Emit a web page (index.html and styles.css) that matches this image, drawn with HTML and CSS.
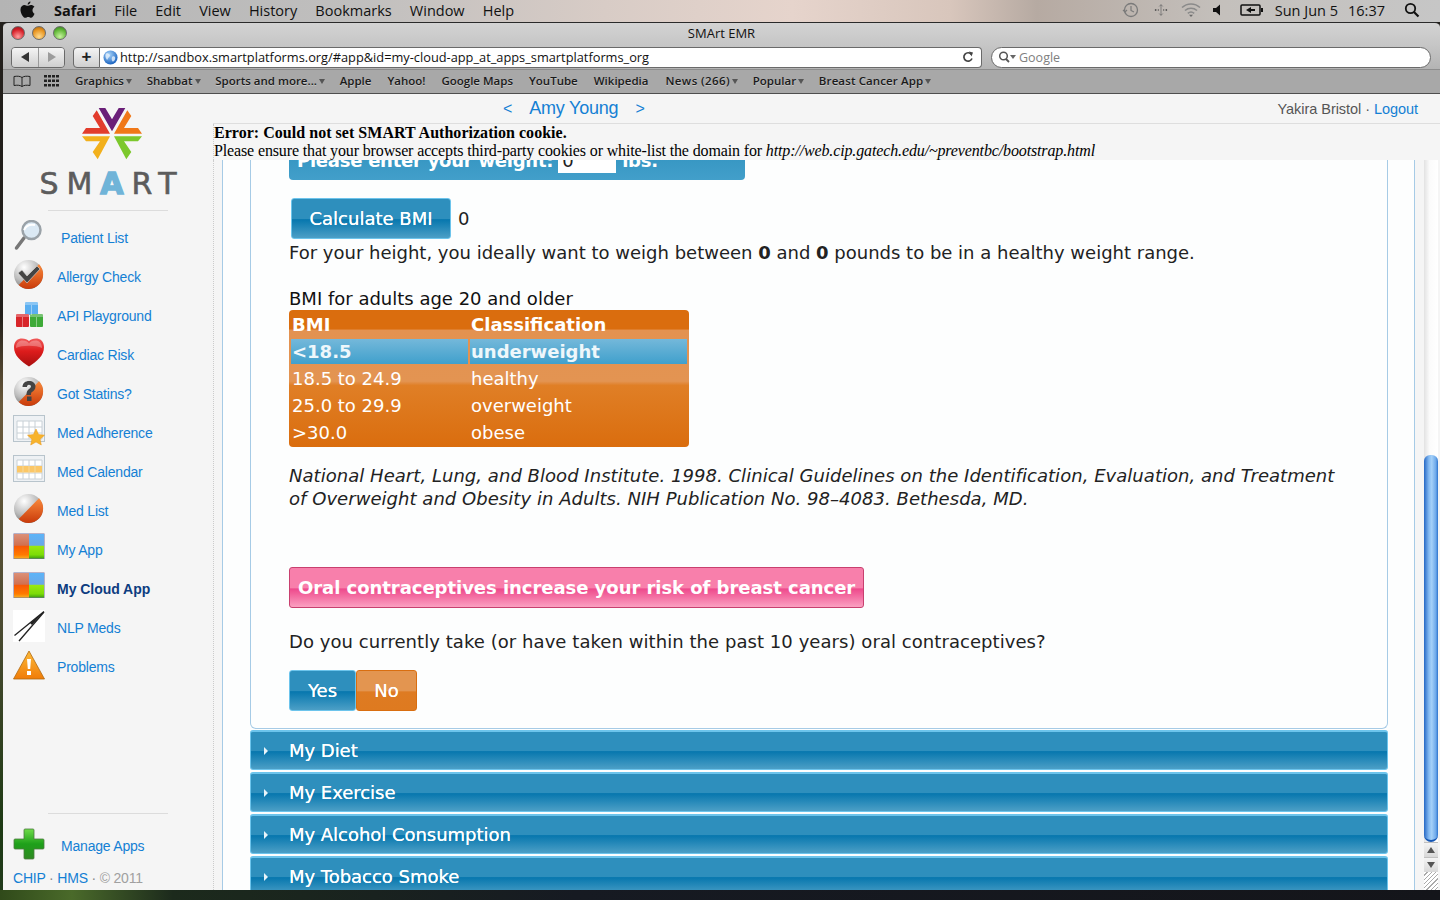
FILE: index.html
```html
<!DOCTYPE html>
<html lang="en">
<head>
<meta charset="utf-8">
<title>SMArt EMR</title>
<link rel="stylesheet" href="styles.css">
</head>
<body>
<svg class="defs" aria-hidden="true">
  <defs>
    <radialGradient id="gBall" cx="35%" cy="25%" r="85%"><stop offset="0" stop-color="#fff"/><stop offset=".55" stop-color="#bbb"/><stop offset="1" stop-color="#666"/></radialGradient>
    <linearGradient id="gOrange" x1="0" y1="0" x2="0" y2="1"><stop offset="0" stop-color="#f98a3c"/><stop offset="1" stop-color="#c93a0a"/></linearGradient>
    <linearGradient id="gHeart" x1="0" y1="0" x2="0" y2="1"><stop offset="0" stop-color="#f05a5a"/><stop offset=".45" stop-color="#dd1c1c"/><stop offset="1" stop-color="#a80f0f"/></linearGradient>
    <linearGradient id="gWarn" x1="0" y1="0" x2="0" y2="1"><stop offset="0" stop-color="#fdbb3a"/><stop offset="1" stop-color="#f07c08"/></linearGradient>
    <linearGradient id="gPlus" x1="0" y1="0" x2="0" y2="1"><stop offset="0" stop-color="#6fdc4a"/><stop offset=".5" stop-color="#1ea01a"/><stop offset="1" stop-color="#2f8a22"/></linearGradient>
    <linearGradient id="gQ1" x1="0" y1="0" x2="0" y2="1"><stop offset="0" stop-color="#dc9078"/><stop offset=".46" stop-color="#d07050"/><stop offset=".5" stop-color="#f85806"/><stop offset=".85" stop-color="#ff7a00"/><stop offset="1" stop-color="#f8b020"/></linearGradient>
    <linearGradient id="gQ2" x1="0" y1="0" x2="0" y2="1"><stop offset="0" stop-color="#5cb4f8"/><stop offset=".46" stop-color="#6aa8e8"/><stop offset=".5" stop-color="#9ae810"/><stop offset=".85" stop-color="#7cdc08"/><stop offset="1" stop-color="#40a010"/></linearGradient>
    <radialGradient id="gGlobe" cx="40%" cy="30%" r="70%"><stop offset="0" stop-color="#a8d4fa"/><stop offset="1" stop-color="#1a63c0"/></radialGradient>
    <symbol id="iBall" viewBox="0 0 32 32"><circle cx="15.500" cy="15.500" r="14.500" fill="url(#gBall)"/><path d="M26 5.300A14.500 14.500 0 0 1 5.700 26Z" fill="url(#gOrange)"/></symbol>
    <symbol id="iQuad" viewBox="0 0 32 32"><rect x=".5" y="1.500" width="31" height="25.500" fill="#7470a0"/><rect x="1" y="2" width="15" height="24.500" fill="url(#gQ1)"/><rect x="16" y="2" width="15" height="24.500" fill="url(#gQ2)"/></symbol>
  </defs>
</svg>

<div class="screen">
  <header class="menubar">
    <svg class="apple" viewBox="0 0 16 18"><path d="M11.200 0c.1 1.600-1.200 3.300-3 3.300C8 1.700 9.500.2 11.200 0ZM15.500 13c-.6 1.400-2 4.200-3.500 4.300-1.300 0-1.700-.8-3.200-.8s-2 .8-3.200.8C3.600 17.300.5 12.400.5 8.600c0-3.400 2.300-5 4.300-5 1.300 0 2.500.9 3.300.9.800 0 2.200-1 3.700-.9 1.100 0 2.700.5 3.600 1.900-3 1.900-2.500 6 .1 7.500Z" fill="#111"/></svg>
    <nav class="menu-items">
      <span class="menu-strong">Safari</span><span>File</span><span>Edit</span><span>View</span><span>History</span><span>Bookmarks</span><span>Window</span><span>Help</span>
    </nav>
    <div class="status">
      <svg class="st-clock" viewBox="0 0 18 18"><circle cx="9" cy="9" r="6.500" fill="none" stroke="#7a7a7a" stroke-width="1.300"/><path d="M9 5v4.500l3 1.500M1 9l2 2 2-2" fill="none" stroke="#7a7a7a" stroke-width="1.200"/></svg>
      <svg class="st-bt" viewBox="0 0 18 18"><g fill="#555"><circle cx="3" cy="9" r="1"/><circle cx="15" cy="9" r="1"/><circle cx="6" cy="9" r=".8"/><circle cx="12" cy="9" r=".8"/></g><path d="M9 3v12M7 5l2-2 2 2M7 13l2 2 2-2" fill="none" stroke="#666" stroke-width=".8"/></svg>
      <svg class="st-wifi" viewBox="0 0 20 16"><path d="M1 5.500a13 13 0 0 1 18 0M4 8.500a9 9 0 0 1 12 0M6.800 11.300a5 5 0 0 1 6.400 0" fill="none" stroke="#8a8a8a" stroke-width="1.500"/><path d="M10 15l-2-2.200h4Z" fill="#6a6a6a"/></svg>
      <svg class="st-vol" viewBox="0 0 14 14"><path d="M2 5h3l4-3.500v11L5 9H2Z" fill="#111"/></svg>
      <svg class="st-bat" viewBox="0 0 24 14"><rect x="1" y="2" width="19" height="10" rx="1" fill="none" stroke="#111" stroke-width="1.500"/><rect x="21" y="5" width="2" height="4" fill="#111"/><path d="M6 7l5-3v6ZM10 6h5v2h-5Z" fill="#111"/></svg>
      <span class="clock-date">Sun Jun 5</span>
      <span class="clock-time">16:37</span>
      <svg class="st-search" viewBox="0 0 16 16"><circle cx="6.500" cy="6.500" r="4.700" fill="none" stroke="#111" stroke-width="1.800"/><path d="M10 10l4.500 4.500" stroke="#111" stroke-width="2.200"/></svg>
    </div>
  </header>

  <div class="window">
    <div class="titlebar">
      <div class="lights"><i class="light red"></i><i class="light amber"></i><i class="light green"></i></div>
      <div class="title">SMArt EMR</div>
    </div>
    <div class="toolbar">
      <div class="navbtns">
        <span class="navbtn"><i class="arrow-l"></i></span><span class="navbtn"><i class="arrow-r"></i></span>
      </div>
      <div class="address">
        <span class="addbtn">+</span>
        <div class="urlfield">
          <svg class="globe" viewBox="0 0 16 16"><circle cx="8" cy="8" r="7.500" fill="url(#gGlobe)"/><path d="M3 4c2-1 3 0 4 1s0 2-1 3-1 3-2 2-2-4-1-6Zm7 3c2-1 3 0 3 2s-2 4-3 3-1-4 0-5Z" fill="#e8f2fc" opacity=".8"/></svg>
          <span class="url">http://sandbox.smartplatforms.org/#app&amp;id=my-cloud-app_at_apps_smartplatforms_org</span>
          <svg class="reload" viewBox="0 0 12 12"><path d="M9.500 3.500A4.200 4.200 0 1 0 10 7.500" fill="none" stroke="#444" stroke-width="1.700"/><path d="M7 .5l4 1-1.500 4Z" fill="#444"/></svg>
        </div>
      </div>
      <div class="searchfield">
        <svg class="sf-icon" viewBox="0 0 20 12"><circle cx="5.500" cy="5" r="3.800" fill="none" stroke="#555" stroke-width="1.500"/><path d="M8 8l3 3" stroke="#555" stroke-width="1.800"/><path d="M12 4h6l-3 4Z" fill="#666"/></svg>
        <span class="sf-text">Google</span>
      </div>
    </div>
    <div class="bookmarks">
      <svg class="bm-book" viewBox="0 0 18 12"><path d="M9 2.500C7 1 4 1 1 1.500v9c3-.5 6-.5 8 1 2-1.500 5-1.500 8-1v-9C14 1 11 1 9 2.500Zm0 0v9" fill="none" stroke="#222" stroke-width="1"/></svg>
      <svg class="bm-grid" viewBox="0 0 15 12"><g fill="#222"><rect x="0" y="0" width="3" height="2.500"/><rect x="4" y="0" width="3" height="2.500"/><rect x="8" y="0" width="3" height="2.500"/><rect x="12" y="0" width="3" height="2.500"/><rect x="0" y="4.500" width="3" height="2.500"/><rect x="4" y="4.500" width="3" height="2.500"/><rect x="8" y="4.500" width="3" height="2.500"/><rect x="12" y="4.500" width="3" height="2.500"/><rect x="0" y="9" width="3" height="2.500"/><rect x="4" y="9" width="3" height="2.500"/><rect x="8" y="9" width="3" height="2.500"/><rect x="12" y="9" width="3" height="2.500"/></g></svg>
      <span class="bm bm-drop">Graphics</span>
      <span class="bm bm-drop">Shabbat</span>
      <span class="bm bm-drop">Sports and more...</span>
      <span class="bm">Apple</span>
      <span class="bm">Yahoo!</span>
      <span class="bm">Google Maps</span>
      <span class="bm">YouTube</span>
      <span class="bm bm-wiki">Wikipedia</span>
      <span class="bm bm-drop bm-news">News (266)</span>
      <span class="bm bm-drop">Popular</span>
      <span class="bm bm-drop bm-breast">Breast Cancer App</span>
    </div>

    <div class="page">
      <aside class="sidebar">
        <div class="logo">
          <svg class="logo-mark" viewBox="0 0 72 62">
            <polygon points="22.700,6 29.300,6 36,17.300 42.700,6 49.300,6 36,29.300" fill="#6a1f78"/>
            <polygon points="20.700,8.300 34,31.700 6,31.700 10,26 24,26 16.700,14" fill="#e23c2c"/>
            <polygon points="51.300,8.300 38,31.700 66,31.700 62,26 48,26 55.300,14" fill="#f07818"/>
            <polygon points="6,34.300 34,34.300 21.700,57.300 16.700,50 24,39.300 10,39.300" fill="#f2b01c"/>
            <polygon points="66,34.300 38,34.300 50.300,57.300 55.300,50 48,39.300 62,39.300" fill="#7cc82c"/>
          </svg>
          <div class="wordmark">SM<span class="wordmark-a">A</span>RT</div>
        </div>
        <div class="rule"></div>
        <ul class="apps">
          <li class="app app-wide">
            <svg class="icon" viewBox="0 0 32 32"><path d="M11 18L3.500 28" stroke="#777" stroke-width="3.500" stroke-linecap="round"/><circle cx="18.500" cy="10" r="9" fill="#dbe9f4" stroke="#9aa2a8" stroke-width="2.500"/><path d="M11 10c2-4.500 6-6 11-5" fill="none" stroke="#fff" stroke-width="2"/></svg>
            <a>Patient List</a>
          </li>
          <li class="app">
            <svg class="icon" viewBox="0 0 32 32"><use href="#iBall"/><path d="M5 14l4-3 5 6 10-10 3 3-13 14Z" fill="#444" stroke="#ddd" stroke-width=".6"/></svg>
            <a>Allergy Check</a>
          </li>
          <li class="app">
            <svg class="icon" viewBox="0 0 32 32"><rect x="12" y="4" width="13" height="13" rx="1" fill="#5aaef0"/><rect x="3" y="16" width="13" height="13" rx="1" fill="#d8262a"/><rect x="17" y="16" width="13" height="13" rx="1" fill="#3eaa38"/><path d="M12 4h13v3H12ZM3 16h13v3H3ZM17 16h13v3H17Z" fill="#fff" opacity=".3"/><path d="M18.500 7v10M9.500 19v10M23.500 19v10" stroke="#fff" stroke-width=".8" opacity=".5"/></svg>
            <a>API Playground</a>
          </li>
          <li class="app">
            <svg class="icon" viewBox="0 0 32 32"><path d="M16 29.500C8 24 1 19 1 10 1 4 5 1.500 9 1.500c3 0 5.500 1 7 2.500 1.500-1.500 4-2.500 7-2.500 4 0 8 2.500 8 8.500 0 9-7 14-15 19.500Z" fill="url(#gHeart)"/><path d="M3 11c0-5 3-7.500 6.500-7.500 3 0 5.500 1 6.500 3 1-2 3.500-3 6.500-3 3.500 0 6.500 2.500 6.500 7.500-6-3-20-3-26 0Z" fill="#fff" opacity=".28"/></svg>
            <a>Cardiac Risk</a>
          </li>
          <li class="app">
            <svg class="icon" viewBox="0 0 32 32"><use href="#iBall"/><path d="M9.500 11c0-4 3-6 6.500-6s6.500 2 6.500 5.500c0 3-2 4.500-3.500 5.500-1 .7-1 1.500-1 3h-4.500c0-3 .5-4.500 2.500-6 1-.8 2-1.500 2-2.500s-.8-1.800-2-1.800c-1.500 0-2 1-2 2.300Zm4.500 9.500h4.500V25h-4.500Z" fill="#444"/></svg>
            <a>Got Statins?</a>
          </li>
          <li class="app">
            <svg class="icon" viewBox="0 0 32 32"><rect x=".5" y=".5" width="31" height="26" fill="#eef1f4" stroke="#b8c4cc"/><path d="M4 6h25v18H4Zm6 0v18m6-18v18m6-18v18M4 12h25M4 18h25" fill="#fff" stroke="#c8d0d6"/><path d="M23 14l2.600 5.500 5.900.7-4.400 4 1.200 5.800-5.300-3-5.300 3 1.200-5.800-4.400-4 5.900-.7Z" fill="#f7b32c" stroke="#e8961a" stroke-width=".5"/></svg>
            <a>Med Adherence</a>
          </li>
          <li class="app">
            <svg class="icon" viewBox="0 0 32 32"><rect x=".5" y="1.500" width="31" height="26" fill="#eef1f4" stroke="#b8c4cc"/><path d="M4 6h25v19H4Zm6 0v19m6-19v19m6-19v19M4 12h25M4 19h25" fill="#fff" stroke="#c8d0d6"/><rect x="4" y="12" width="25" height="6.500" fill="#fbc768"/><path d="M10 12v6.500M16 12v6.500M22 12v6.500" stroke="#f8e0a8" stroke-width=".8"/></svg>
            <a>Med Calendar</a>
          </li>
          <li class="app">
            <svg class="icon" viewBox="0 0 32 32"><use href="#iBall"/></svg>
            <a>Med List</a>
          </li>
          <li class="app">
            <svg class="icon" viewBox="0 0 32 32"><use href="#iQuad"/></svg>
            <a>My App</a>
          </li>
          <li class="app app-current">
            <svg class="icon" viewBox="0 0 32 32"><use href="#iQuad"/></svg>
            <a>My Cloud App</a>
          </li>
          <li class="app">
            <svg class="icon" viewBox="0 0 32 32"><rect width="32" height="32" fill="#fff"/><path d="M31 1.500L1.500 25.500M31 2L6 31" fill="none" stroke="#222" stroke-width="1.300"/><path d="M31 1.500L17 13l2 2Z" fill="#222"/></svg>
            <a>NLP Meds</a>
          </li>
          <li class="app">
            <svg class="icon" viewBox="0 0 32 32"><path d="M16 2l15.500 28H.5Z" fill="url(#gWarn)" stroke="#b06a10" stroke-width=".8"/><path d="M14 10h4l-.8 10h-2.400Zm0 12h4v4h-4Z" fill="#fff"/></svg>
            <a>Problems</a>
          </li>
        </ul>
        <div class="side-bottom">
          <div class="rule rule-bottom"></div>
          <div class="app app-wide app-manage">
            <svg class="icon" viewBox="0 0 32 32"><path d="M11 2a1 1 0 0 1 1-1h8a1 1 0 0 1 1 1v9h9a1 1 0 0 1 1 1v8a1 1 0 0 1-1 1h-9v9a1 1 0 0 1-1 1h-8a1 1 0 0 1-1-1v-9H2a1 1 0 0 1-1-1v-8a1 1 0 0 1 1-1h9Z" fill="url(#gPlus)" stroke="#4c7a40" stroke-width=".8"/></svg>
            <a>Manage Apps</a>
          </div>
          <div class="credits"><a>CHIP</a> <span class="dot">·</span> <a>HMS</a> <span class="dot">·</span> <span class="copy">© 2011</span></div>
        </div>
      </aside>

      <main class="main">
        <div class="pagehead">
          <div class="patient"><a class="pt-arrow">&lt;</a><a class="pt-name">Amy Young</a><a class="pt-arrow">&gt;</a></div>
          <div class="user">Yakira Bristol · <a>Logout</a></div>
        </div>
        <div class="cookie-error">
          <div class="err-head">Error: Could not set SMART Authorization cookie.</div>
          <div>Please ensure that your browser accepts third-party cookies or white-list the domain for <i>http://web.cip.gatech.edu/~preventbc/bootstrap.html</i></div>
        </div>
        <div class="viewport">
          <div class="frame">
            <div class="scrolled">
              <div class="panel">
                <div class="weight-box"><b class="weight-label">Please enter your weight:</b><span class="weight-input">0</span><b class="weight-label weight-unit">lbs.</b></div>
                <div class="calc-row"><button class="btn btn-calc">Calculate BMI</button><span class="calc-val">0</span></div>
                <p class="para para-height">For your height, you ideally want to weigh between <b>0</b> and <b>0</b> pounds to be in a healthy weight range.</p>
                <p class="para para-caption">BMI for adults age 20 and older</p>
                <table class="bmi">
                  <tr class="bmi-head"><td>BMI</td><td>Classification</td></tr>
                  <tr class="bmi-hl"><td>&lt;18.5</td><td>underweight</td></tr>
                  <tr><td>18.5 to 24.9</td><td>healthy</td></tr>
                  <tr><td>25.0 to 29.9</td><td>overweight</td></tr>
                  <tr class="bmi-last"><td>&gt;30.0</td><td>obese</td></tr>
                </table>
                <p class="citation">National Heart, Lung, and Blood Institute. 1998. Clinical Guidelines on the Identification, Evaluation, and Treatment of Overweight and Obesity in Adults. NIH Publication No. 98–4083. Bethesda, MD.</p>
                <div class="alert">Oral contraceptives increase your risk of breast cancer</div>
                <p class="para para-question">Do you currently take (or have taken within the past 10 years) oral contraceptives?</p>
                <div class="choice"><button class="btn btn-yes">Yes</button><button class="btn btn-no">No</button></div>
              </div>
              <div class="acc"><i class="acc-tri"></i>My Diet</div>
              <div class="acc"><i class="acc-tri"></i>My Exercise</div>
              <div class="acc"><i class="acc-tri"></i>My Alcohol Consumption</div>
              <div class="acc"><i class="acc-tri"></i>My Tobacco Smoke</div>
            </div>
          </div>
          <div class="gutter"></div>
          <div class="scrollbar">
            <div class="sb-thumb"></div>
            <div class="sb-btn"><i class="sb-up"></i></div>
            <div class="sb-btn"><i class="sb-down"></i></div>
            <div class="sb-grip"></div>
          </div>
        </div>
      </main>
    </div>
  </div>
  <div class="desk-bottom"></div>
</div>
</body>
</html>
```

FILE: styles.css
```css
* { box-sizing: border-box; }
html, body { margin: 0; padding: 0; height: 100%; overflow: hidden; }
body { font-family: "Liberation Sans", Arial, sans-serif; background: #14171a; }
.defs { display: block; width: 0; height: 0; overflow: hidden; }
a { color: #1480d4; text-decoration: none; }
ul { list-style: none; margin: 0; padding: 0; }

.screen {
  width: 1440px; height: 900px; display: flex; flex-direction: column;
  background: linear-gradient(#23201c 0, #23201c 35%, #6b5a3c 45%, #4a4a30 70%, #1d3a14 92%, #223a1c 100%);
}

/* menu bar */
.menubar {
  height: 22px; flex: none; display: flex; align-items: center; color: #111; padding-bottom: 2px;
  font-family: "Open Sans", sans-serif; font-size: 14.500px;
  background: linear-gradient(90deg, #b4b4b4 0, #c0bfbe 25%, #d8ccc6 42%, #e6d4cc 55%, #d8c6bc 66%, #b6aaa2 72%, #c4c0bc 85%, #c6c6c6 100%);
}
.apple { width: 15px; height: 18px; margin-left: 20px; flex: none; }
.menu-items { display: flex; gap: 18.100px; margin-left: 19px; }
.menu-strong { font-weight: 700; }
.status { margin-left: auto; display: flex; align-items: center; }
.st-clock { width: 18px; height: 18px; }
.st-bt { width: 16px; height: 16px; margin-left: 13px; }
.st-wifi { width: 20px; height: 16px; margin-left: 12px; }
.st-vol { width: 14px; height: 14px; margin-left: 10px; }
.st-bat { width: 24px; height: 14px; margin-left: 15px; }
.clock-date { margin-left: 11px; }
.clock-time { margin-left: 10px; }
.st-search { width: 16px; height: 16px; margin-left: 19px; margin-right: 20px; }

/* window */
.window {
  height: 868px; flex: none; margin-left: 3px; display: flex; flex-direction: column;
  border-radius: 5px 5px 0 0; overflow: hidden; border-top: 1px solid #2a2a2a;
}
.titlebar {
  height: 22px; flex: none; display: flex; align-items: center; position: relative; padding-bottom: 2px;
  background: linear-gradient(#d3d3d3, #c6c6c6);
}
.lights { display: flex; gap: 7px; margin-left: 8px; }
.light { width: 14px; height: 14px; border-radius: 50%; border: 1px solid #6b6b6b; }
.red { background: radial-gradient(circle at 50% 80%, #ffa0a0, #d8222a 60%, #8c1018); }
.amber { background: radial-gradient(circle at 50% 80%, #ffdc90, #e89420 60%, #a06010); }
.green { background: radial-gradient(circle at 50% 80%, #c8f4a0, #62b838 60%, #2e7a18); }
.title { position: absolute; left: 0; right: 0; text-align: center; font: 13px "Open Sans", sans-serif; color: #111; }

.toolbar {
  height: 24px; flex: none; display: flex; align-items: center;
  background: linear-gradient(#c6c6c6, #b4b4b4);
}
.navbtns { display: flex; margin-left: 8px; border: 1px solid #6a6a6a; border-radius: 4px; height: 21px; overflow: hidden; }
.navbtn { width: 26px; display: flex; align-items: center; justify-content: center; background: linear-gradient(#f4f4f4, #cfcfcf); }
.navbtn + .navbtn { border-left: 1px solid #9a9a9a; }
.arrow-l { border: 5px solid transparent; border-right: 8px solid #333; border-left: 0; }
.arrow-r { border: 5px solid transparent; border-left: 8px solid #9c9c9c; border-right: 0; }
.address { display: flex; margin-left: 8px; width: 909px; height: 21px; }
.addbtn {
  width: 27px; flex: none; text-align: center; font: 700 17px/18px "Liberation Sans", sans-serif; color: #222;
  background: linear-gradient(#f4f4f4, #cfcfcf); border: 1px solid #6a6a6a; border-radius: 4px 0 0 4px;
}
.urlfield {
  flex: 1; display: flex; align-items: center; background: #fff;
  border: 1px solid #6a6a6a; border-left: 0; border-radius: 0 4px 4px 0;
}
.globe { width: 15px; height: 15px; margin-left: 3px; flex: none; }
.url { font: 12.800px "Open Sans", sans-serif; color: #111; margin-left: 2px; white-space: nowrap; }
.reload { width: 12px; height: 12px; margin-left: auto; margin-right: 7px; }
.searchfield {
  margin-left: 9px; width: 440px; height: 21px; display: flex; align-items: center;
  background: #fff; border: 1px solid #6a6a6a; border-radius: 11px;
}
.sf-icon { width: 20px; height: 12px; margin-left: 6px; }
.sf-text { font: 12.500px "Open Sans", sans-serif; color: #808080; margin-left: 1px; }

.bookmarks {
  height: 25px; flex: none; display: flex; align-items: center; background: #a8a8a8; padding-bottom: 2px;
  border-top: 1px solid #8d8d8d; border-bottom: 1px solid #4e4e4e;
  font: 600 11.500px "Open Sans", sans-serif; color: #1a1a1a; text-shadow: 0 1px 0 #c4c4c4;
}
.bm-book { width: 18px; height: 12px; margin-left: 10px; flex: none; }
.bm-grid { width: 15px; height: 12px; margin-left: 13px; margin-right: 16px; flex: none; }
.bm { margin-right: 16px; white-space: nowrap; }
.bm-drop { margin-right: 14.700px; }
.bm-wiki { margin-right: 17px; }
.bm-news { letter-spacing: .4px; }
.bm-breast { letter-spacing: .12px; }
.bm-drop::after {
  content: ""; display: inline-block; margin-left: 2px; vertical-align: 1px;
  border: 3.500px solid transparent; border-top: 5px solid #555; border-bottom: 0;
}

/* page */
.page { flex: 1; min-height: 0; display: flex; background: #f5f5f5; }
.sidebar { width: 210px; flex: none; display: flex; flex-direction: column; padding-top: 8px; font-size: 14px; letter-spacing: -.2px; }
.logo { display: flex; flex-direction: column; align-items: center; }
.logo-mark { width: 72px; height: 62px; display: block; margin-left: 8px; }
.wordmark {
  font: 400 30px/30px "DejaVu Sans", sans-serif; color: #5c5c5c; letter-spacing: 8px;
  margin-top: 5px; padding-left: 8px; -webkit-text-stroke: .6px #5c5c5c;
}
.wordmark-a { color: #70b4d8; font-weight: 700; -webkit-text-stroke: 1.500px #70b4d8; }
.rule { height: 1px; background: #dcdcdc; margin: 11px 0 0 45px; width: 120px; flex: none; }
.apps { margin-top: 7px; }
.app { height: 39px; display: flex; align-items: center; }
.icon { width: 32px; height: 32px; margin: -4px 12px 0 10px; flex: none; display: block; }
.app-wide a { margin-left: 4px; }
.app-current a { color: #0d3c80; font-weight: 700; letter-spacing: -.03px; }
.side-bottom { margin-top: auto; }
.rule-bottom { margin-top: 0; }
.app-manage { height: 41px; margin-top: 11px; }
.credits { margin: 2px 0 2px 10px; color: #8a8a8a; height: 20px; line-height: 20px; }
.copy { color: #a0a0a0; }

.main { flex: 1; min-width: 0; display: flex; flex-direction: column; }
.pagehead { height: 30px; flex: none; display: flex; align-items: center; position: relative; border-bottom: 1px solid #dedede; }
.patient { position: absolute; left: 290px; display: flex; align-items: center; font-size: 18px; letter-spacing: -.2px; }
.pt-arrow { font-size: 16px; }
.pt-name { margin: 0 17px 0 17px; }
.user { margin-left: auto; margin-right: 22px; font-size: 14.500px; color: #555; letter-spacing: -.05px; }
.cookie-error {
  height: 36px; flex: none; padding: 0; background: #f5f5f5; color: #000; border-left: 1px dotted #ccc;
  font: 16px/18px "Liberation Serif", serif; letter-spacing: -.135px; white-space: nowrap;
}
.err-head { font-weight: 700; letter-spacing: .03px; }
.viewport { flex: 1; min-height: 0; display: flex; border-left: 1px dotted #ccc; }
.frame {
  width: 1193px; margin-left: 8px; flex: none; overflow: hidden; background: #fdfefe;
  border-left: 1px solid #a6cbe6; border-right: 1px solid #a6cbe6; padding: 0 26px 0 27px;
  font-family: "DejaVu Sans", Verdana, sans-serif; font-size: 18px; color: #222;
}
.scrolled { margin-top: -22px; }
.panel {
  height: 591px; background: #fdfefe; padding: 0 38px;
  border: 1px solid #a6cbe6; border-top: 0; border-radius: 0 0 6px 6px;
}
.weight-box {
  width: 456px; height: 42px; display: flex; align-items: center; gap: 5px; padding: 2px 0 0 8px; color: #fff;
  background: linear-gradient(#2e8fbd, #429fca); border-radius: 0 0 4px 4px;
}
.weight-label { letter-spacing: -.25px; }
.weight-unit { margin-left: 1px; }
.weight-input { width: 58px; height: 24px; margin-top: 2px; background: #fff; color: #222; padding-left: 4px; line-height: 24px; }
.calc-row { display: flex; align-items: center; margin: 18px 0 0 2px; height: 41px; }
.btn { font: 18px "DejaVu Sans", Verdana, sans-serif; color: #fff; border-radius: 3px; padding: 0; cursor: pointer; text-shadow: 0 0 .5px #fff; }
.btn-calc, .btn-yes, .acc {
  background: linear-gradient(#2e8fbd 0, #2e8fbd 50%, #0777ae 53%, #4c9fc6 100%);
  border: 1px solid #6cc4ec;
}
.btn-calc { width: 160px; height: 41px; }
.calc-val { margin-left: 7px; }
.para { margin: 0; line-height: 23px; white-space: nowrap; }
.para-height { margin-top: 2px; }
.para-caption { margin-top: 23px; color: #111; }
.bmi {
  width: 400px; height: 137px; margin-top: 0; border-collapse: separate; border-spacing: 2px 0; border-radius: 4px; color: #fff; table-layout: fixed;
  background: linear-gradient(#da6d0e 0, #da6d0e 14%, #e39250 14.500%, #e39452 52%, #e07f26 55%, #da6d0e 100%);
}
.bmi td { padding: 0 0 0 1px; height: 27px; line-height: 27px; }
.bmi td:first-child { width: 177px; }
.bmi-head td { font-weight: 700; height: 28px; line-height: 27px; padding-top: 1px; }
.bmi-last td { height: 28px; line-height: 28px; }
.bmi-hl td {
  font-weight: 700; color: #eef7fb; background: linear-gradient(#74b8da, #40a0cc) padding-box;
  border-top: 1px solid transparent; border-bottom: 1px solid transparent; line-height: 25px;
}
.citation { margin: 17px 0 0; font-style: italic; line-height: 23px; color: #222; letter-spacing: .04px; }
.alert {
  margin-top: 57px; width: 575px; height: 41px; padding-left: 8px; line-height: 39px; white-space: nowrap; font-weight: 700; color: #fff; letter-spacing: -.04px;
  background: linear-gradient(#f87fab 0, #f87fab 50%, #ee4a8c 54%, #fba0c1 100%);
  border: 1px solid #c8406f; border-radius: 3px;
}
.para-question { margin-top: 22px; letter-spacing: .06px; }
.choice { display: flex; margin-top: 17px; }
.btn-yes { width: 67px; height: 41px; }
.btn-no { width: 61px; height: 41px; background: linear-gradient(#e39550, #e39550 50%, #de7b22 54%, #de7a20); border: 1px solid #d96e10; }
.acc {
  height: 40px; margin-top: 2px; display: flex; align-items: center; color: #fff; padding-left: 13px; border-radius: 3px;
  border-top-width: 2px; letter-spacing: -.03px; text-shadow: 0 0 .5px #fff;
}
.panel + .acc { margin-top: 1px; }
.acc-tri { border: 4px solid transparent; border-left: 4.500px solid #e8f4fa; border-right: 0; margin-right: 21px; }

.gutter { width: 9px; flex: none; background: #f5f5f5; }
.scrollbar {
  width: 14px; flex: none; display: flex; flex-direction: column; background: linear-gradient(90deg, #e2e2e2, #fbfbfb 40%, #fff);
  padding-top: 295px;
}
.sb-thumb {
  height: 387px; flex: none; border-radius: 7px 7px 8px 8px;
  background: linear-gradient(90deg, #2668c4, #84baf2 35%, #a4d0f8 55%, #6ca8ea 85%, #2a72cc);
  border-bottom: 2px solid #1456b4;
}
.sb-btn { height: 15px; flex: none; display: flex; align-items: center; justify-content: center; background: linear-gradient(#f4f4f4, #d8d8d8); border-top: 1px solid #c0c0c0; }
.sb-up { border: 4px solid transparent; border-bottom: 6px solid #555; border-top: 0; }
.sb-down { border: 4px solid transparent; border-top: 6px solid #555; border-bottom: 0; }
.sb-grip { flex: 1; background: repeating-linear-gradient(135deg, #fff 0, #fff 2px, #aaa 2px, #aaa 3px); }

.desk-bottom { flex: 1; background: linear-gradient(90deg, #304a1a 0, #4a6a2a 5%, #1c2a1c 12%, #161a22 40%, #14151a 100%); }
```
